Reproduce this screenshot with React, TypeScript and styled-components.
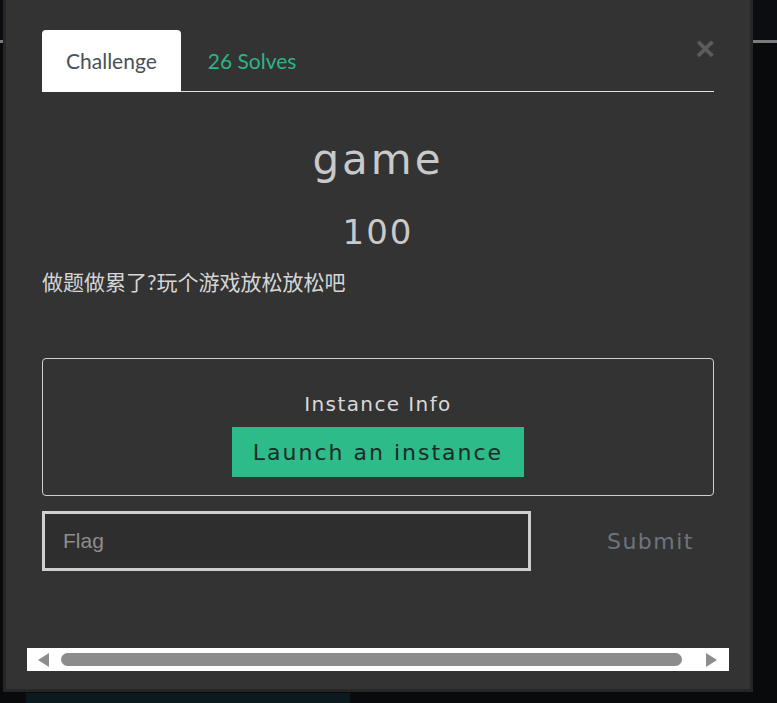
import React from "react";
import styled, { createGlobalStyle } from "styled-components";

const GlobalStyle = createGlobalStyle`
  html, body {
    margin: 0;
    padding: 0;
    background: #090a0c;
    overflow: hidden;
    font-family: "Lato", "Noto Sans CJK SC", sans-serif;
  }
  * { box-sizing: border-box; }
`;

const Page = styled.div`
  width: 777px;
  height: 703px;
  position: relative;
  overflow: hidden;
`;

const Navbar = styled.div`
  height: 43px;
  background: #0c0d10;
  border-bottom: 3px solid #7b7b7b;
`;

const Main = styled.div`
  padding: 650px 0 0 26px;
`;

const BgCard = styled.div`
  width: 324px;
  height: 120px;
  background: #0a1a1f;
`;

const Modal = styled.div`
  position: fixed;
  top: 0;
  left: 3px;
  width: 750px;
  height: 692px;
  background: #333333;
  border: 3px solid #262626;
  border-top: 0;
  padding: 30px 36px 0;
  display: flex;
  flex-direction: column;
`;

const Header = styled.div`
  display: flex;
  align-items: flex-start;
  justify-content: space-between;
  border-bottom: 1px solid #dee2e6;
`;

const Tabs = styled.div`
  display: flex;
  gap: 3px;
`;

const Tab = styled.div<{ $active?: boolean }>`
  font-family: "Lato", sans-serif;
  font-size: 21px;
  line-height: 32px;
  padding: 15px 24px 15px;
  margin-bottom: -1px;
  border-radius: 4px 4px 0 0;
  background: ${(p) => (p.$active ? "#ffffff" : "transparent")};
  color: ${(p) => (p.$active ? "#495057" : "#2bb586")};
  cursor: pointer;
`;

const Close = styled.button`
  background: none;
  border: 0;
  padding: 0;
  margin: 1px -1px 0 0;
  font-family: "Liberation Sans", Arial, sans-serif;
  font-weight: 700;
  font-size: 34px;
  line-height: 34px;
  color: #5c5c5c;
  cursor: pointer;
`;

const Title = styled.h2`
  margin: 43px 0 0;
  text-align: center;
  font-family: "DejaVu Sans", sans-serif;
  font-weight: 400;
  font-size: 42px;
  line-height: 50px;
  letter-spacing: 3px;
  color: #c9c9c9;
`;

const Points = styled.h3`
  margin: 27px 0 0;
  text-align: center;
  font-family: "DejaVu Sans", sans-serif;
  font-weight: 400;
  font-size: 34px;
  line-height: 41px;
  letter-spacing: 2px;
  color: #c9c9c9;
`;

const Description = styled.p`
  margin: 13px 0 0;
  font-family: "Lato", "Noto Sans CJK SC", sans-serif;
  font-size: 21px;
  line-height: 31px;
  color: #d6d6d6;
`;

const InstanceBox = styled.div`
  margin-top: 61px;
  border: 1px solid #cfcfcf;
  border-radius: 4px;
  padding: 33px 0 18px;
  display: flex;
  flex-direction: column;
  align-items: center;
`;

const InstanceTitle = styled.div`
  font-family: "DejaVu Sans", sans-serif;
  font-size: 20px;
  line-height: 24px;
  letter-spacing: 1.4px;
  color: #d9d9d9;
`;

const LaunchButton = styled.button`
  margin-top: 11px;
  width: 292px;
  height: 50px;
  border: 0;
  border-radius: 0;
  background: #2cbb89;
  color: #1d2b27;
  font-family: "DejaVu Sans", sans-serif;
  font-size: 22px;
  letter-spacing: 2px;
  cursor: pointer;
`;

const SubmitRow = styled.div`
  margin-top: 15px;
  display: grid;
  grid-template-columns: 489px 1fr;
  align-items: center;
`;

const FlagInput = styled.input`
  height: 60px;
  width: 100%;
  background: #2e2e2e;
  border: 3px solid #cfcfcf;
  padding: 0 18px;
  font-family: "Liberation Sans", Arial, sans-serif;
  font-size: 21px;
  color: #ddd;
  outline: none;
  &::placeholder {
    color: #8d8d8d;
  }
`;

const SubmitButton = styled.button`
  justify-self: end;
  background: none;
  border: 0;
  padding: 0 20px;
  font-family: "DejaVu Sans", sans-serif;
  font-size: 22px;
  letter-spacing: 1.5px;
  color: #6c757d;
  cursor: pointer;
`;

const ScrollStrip = styled.div`
  margin: 77px -15px 0;
  height: 23px;
  background: #ffffff;
  display: flex;
  align-items: center;
  padding: 0 12px 0 11px;
`;

const Arrow = styled.div<{ $dir: "left" | "right" }>`
  width: 0;
  height: 0;
  border-top: 7px solid transparent;
  border-bottom: 7px solid transparent;
  ${(p) =>
    p.$dir === "left"
      ? "border-right: 11px solid #8c8c8c;"
      : "border-left: 11px solid #8c8c8c;"}
`;

const Track = styled.div`
  flex: 1;
  margin: 0 12px;
  height: 13px;
`;

const Thumb = styled.div`
  height: 13px;
  border-radius: 7px;
  background: #8c8c8c;
`;

export default function App() {
  const thumbRatio = 621 / 633;
  return (
    <Page>
      <GlobalStyle />
      <Navbar />
      <Main>
        <BgCard />
      </Main>
      <Modal>
        <Header>
          <Tabs>
            <Tab $active>Challenge</Tab>
            <Tab>26 Solves</Tab>
          </Tabs>
          <Close aria-label="Close">×</Close>
        </Header>
        <Title>game</Title>
        <Points>100</Points>
        <Description>做题做累了?玩个游戏放松放松吧</Description>
        <InstanceBox>
          <InstanceTitle>Instance Info</InstanceTitle>
          <LaunchButton>Launch an instance</LaunchButton>
        </InstanceBox>
        <SubmitRow>
          <FlagInput placeholder="Flag" />
          <SubmitButton>Submit</SubmitButton>
        </SubmitRow>
        <ScrollStrip>
          <Arrow $dir="left" />
          <Track>
            <Thumb style={{ width: `${thumbRatio * 100}%` }} />
          </Track>
          <Arrow $dir="right" />
        </ScrollStrip>
      </Modal>
    </Page>
  );
}
